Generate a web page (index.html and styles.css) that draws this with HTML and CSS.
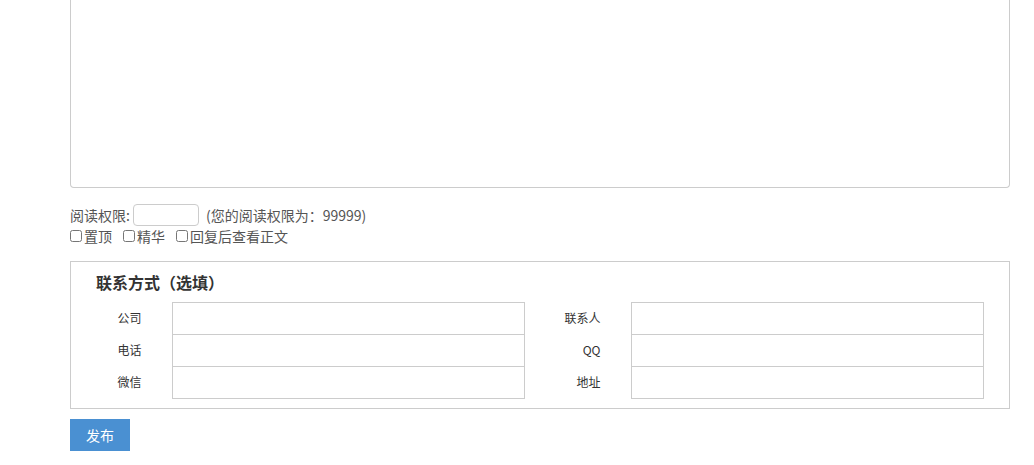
FILE: index.html
```html
<!DOCTYPE html>
<html lang="zh-CN">
<head>
    <meta charset="UTF-8">
    <title>发布</title>
    <link rel="stylesheet" href="styles.css">
</head>
<body>
    <div class="main">
        <textarea class="content" name="content"></textarea>

        <div class="perm">
            <label for="readperm">阅读权限:</label>
            <input type="text" id="readperm" class="perm-input">
            <span class="perm-tip">(您的阅读权限为：99999)</span>
        </div>
        <div class="opts">
            <label><input type="checkbox" name="top">置顶</label>
            <label><input type="checkbox" name="digest">精华</label>
            <label><input type="checkbox" name="hide">回复后查看正文</label>
        </div>

        <div class="contact">
            <h3>联系方式（选填）</h3>
            <table class="contact-table">
                <colgroup>
                    <col class="c-label1">
                    <col class="c-input">
                    <col class="c-label2">
                    <col class="c-input">
                </colgroup>
                <tr>
                    <th>公司</th>
                    <td><input type="text" name="company"></td>
                    <th>联系人</th>
                    <td><input type="text" name="linkman"></td>
                </tr>
                <tr>
                    <th>电话</th>
                    <td><input type="text" name="phone"></td>
                    <th>QQ</th>
                    <td><input type="text" name="qq"></td>
                </tr>
                <tr>
                    <th>微信</th>
                    <td><input type="text" name="wechat"></td>
                    <th>地址</th>
                    <td><input type="text" name="address"></td>
                </tr>
            </table>
        </div>

        <button type="submit" class="btn-submit">发布</button>
    </div>
</body>
</html>
```

FILE: styles.css
```css
body {
    margin: 0;
    font-family: "Noto Sans CJK SC", "Noto Sans", sans-serif;
    font-size: 14px;
    color: #555;
    background: #fff;
}
.main {
    width: 940px;
    margin-left: 70px;
}
.content {
    display: block;
    box-sizing: border-box;
    width: 940px;
    height: 188px;
    border: 1px solid #ccc;
    border-top: none;
    border-radius: 0 0 4px 4px;
    resize: none;
    outline: none;
}
.perm {
    display: flex;
    align-items: center;
    margin-top: 16px;
    height: 22px;
    line-height: 22px;
}
.perm-input {
    box-sizing: border-box;
    width: 66px;
    height: 22px;
    margin: 0 7px 0 3px;
    border: 1px solid #ccc;
    border-radius: 4px;
    outline: none;
}
.opts {
    display: flex;
    gap: 11px;
    height: 20px;
    line-height: 20px;
}
.opts label {
    display: flex;
    align-items: center;
}
.opts input {
    width: 12px;
    height: 12px;
    margin: 0 2px 0 0;
}
.contact {
    box-sizing: border-box;
    margin-top: 15px;
    border: 1px solid #ccc;
    padding: 7px 25px 9px 25px;
}
.contact h3 {
    margin: 0 0 7px 0;
    font-size: 16px;
    font-weight: bold;
    color: #333;
    line-height: 26px;
}
.contact-table {
    border-collapse: collapse;
    table-layout: fixed;
    width: 887px;
}
.c-label1 { width: 76px; }
.c-label2 { width: 107px; }
.c-input { width: 352px; }
.contact-table th {
    padding: 0 30px 3px 0;
    text-align: right;
    font-size: 12px;
    font-weight: normal;
    color: #333;
    height: 28px;
}
.contact-table td {
    padding: 0;
    border: 1px solid #ccc;
    height: 31px;
}
.contact-table td input {
    display: block;
    box-sizing: border-box;
    width: 100%;
    height: 31px;
    border: none;
    outline: none;
}
.btn-submit {
    display: block;
    margin-top: 10px;
    width: 60px;
    height: 32px;
    border: none;
    background: #4a90d2;
    color: #fff;
    font-family: "Noto Sans CJK SC", sans-serif;
    font-size: 14px;
    cursor: pointer;
}
```
